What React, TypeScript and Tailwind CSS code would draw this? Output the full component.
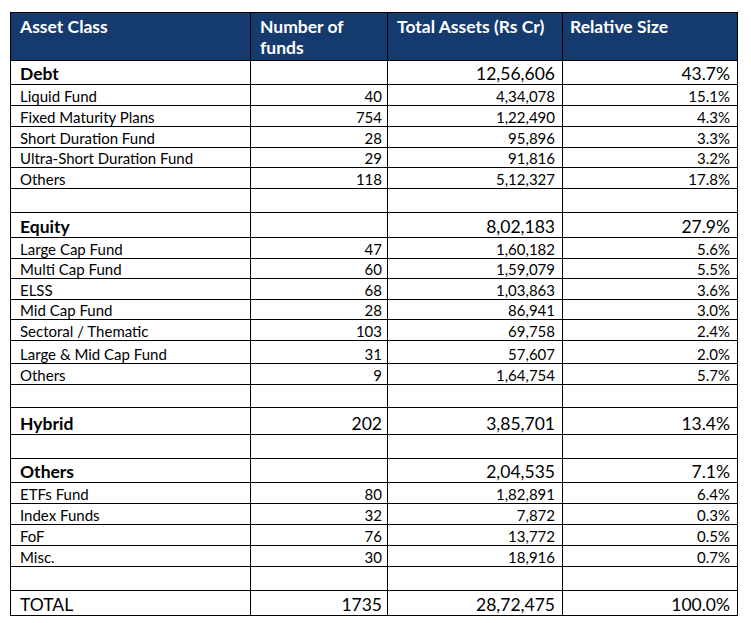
import React from "react";

type Row = { k: "sec" | "item" | "empty" | "total"; label?: string; n?: string; t?: string; r?: string; h: number };

const rows: Row[] = [
  { k: "sec", label: "Debt", n: "", t: "12,56,606", r: "43.7%", h: 24 },
  { k: "item", label: "Liquid Fund", n: "40", t: "4,34,078", r: "15.1%", h: 21 },
  { k: "item", label: "Fixed Maturity Plans", n: "754", t: "1,22,490", r: "4.3%", h: 21 },
  { k: "item", label: "Short Duration Fund", n: "28", t: "95,896", r: "3.3%", h: 21 },
  { k: "item", label: "Ultra-Short Duration Fund", n: "29", t: "91,816", r: "3.2%", h: 20 },
  { k: "item", label: "Others", n: "118", t: "5,12,327", r: "17.8%", h: 21 },
  { k: "empty", h: 24 },
  { k: "sec", label: "Equity", n: "", t: "8,02,183", r: "27.9%", h: 25 },
  { k: "item", label: "Large Cap Fund", n: "47", t: "1,60,182", r: "5.6%", h: 21 },
  { k: "item", label: "Multi Cap Fund", n: "60", t: "1,59,079", r: "5.5%", h: 20 },
  { k: "item", label: "ELSS", n: "68", t: "1,03,863", r: "3.6%", h: 21 },
  { k: "item", label: "Mid Cap Fund", n: "28", t: "86,941", r: "3.0%", h: 20 },
  { k: "item", label: "Sectoral / Thematic", n: "103", t: "69,758", r: "2.4%", h: 21 },
  { k: "item", label: "Large & Mid Cap Fund", n: "31", t: "57,607", r: "2.0%", h: 23 },
  { k: "item", label: "Others", n: "9", t: "1,64,754", r: "5.7%", h: 21 },
  { k: "empty", h: 23 },
  { k: "sec", label: "Hybrid", n: "202", t: "3,85,701", r: "13.4%", h: 27 },
  { k: "empty", h: 24 },
  { k: "sec", label: "Others", n: "", t: "2,04,535", r: "7.1%", h: 24 },
  { k: "item", label: "ETFs Fund", n: "80", t: "1,82,891", r: "6.4%", h: 21 },
  { k: "item", label: "Index Funds", n: "32", t: "7,872", r: "0.3%", h: 21 },
  { k: "item", label: "FoF", n: "76", t: "13,772", r: "0.5%", h: 21 },
  { k: "item", label: "Misc.", n: "30", t: "18,916", r: "0.7%", h: 21 },
  { k: "empty", h: 24 },
  { k: "total", label: "TOTAL", n: "1735", t: "28,72,475", r: "100.0%", h: 25 },
];

export default function App() {
  return (
    <div className="w-[751px] h-[623px] bg-white pt-[12px] pl-[10px]" style={{ fontFamily: "Lato, 'Open Sans', sans-serif" }}>
      <table className="border-collapse text-black">
        <colgroup>
          <col className="w-[240px]" />
          <col className="w-[137px]" />
          <col className="w-[175px]" />
          <col className="w-[175px]" />
        </colgroup>
        <thead>
          <tr className="h-[48px] bg-[#153b6e] text-white text-[17.5px] font-bold leading-[21px]">
            <th className="border border-black align-top text-left pl-[9px] pt-[3px]">Asset Class</th>
            <th className="border border-black align-top text-left pl-[9px] pt-[3px]">Number of<br />funds</th>
            <th className="border border-black align-top text-left pl-[9px] pt-[3px]">Total Assets (Rs Cr)</th>
            <th className="border border-black align-top text-left pl-[7px] pt-[3px]">Relative Size</th>
          </tr>
        </thead>
        <tbody>
          {rows.map((r, i) => {
            const big = r.k === "sec" || r.k === "total";
            const size = big ? "text-[17.5px] leading-[20px]" : "text-[15px] leading-[18px]";
            const labelW = r.k === "sec" ? "font-bold" : "font-normal";
            return (
              <tr key={i} style={{ height: r.h }} className={size}>
                <td className={`border border-black pl-[9px] pr-[5px] py-0 align-bottom ${labelW}`}>{r.label ?? ""}</td>
                <td className="border border-black pr-[5px] py-0 text-right align-bottom">{r.n ?? ""}</td>
                <td className="border border-black pr-[7px] py-0 text-right align-bottom">{r.t ?? ""}</td>
                <td className="border border-black pr-[7px] py-0 text-right align-bottom">{r.r ?? ""}</td>
              </tr>
            );
          })}
        </tbody>
      </table>
    </div>
  );
}
